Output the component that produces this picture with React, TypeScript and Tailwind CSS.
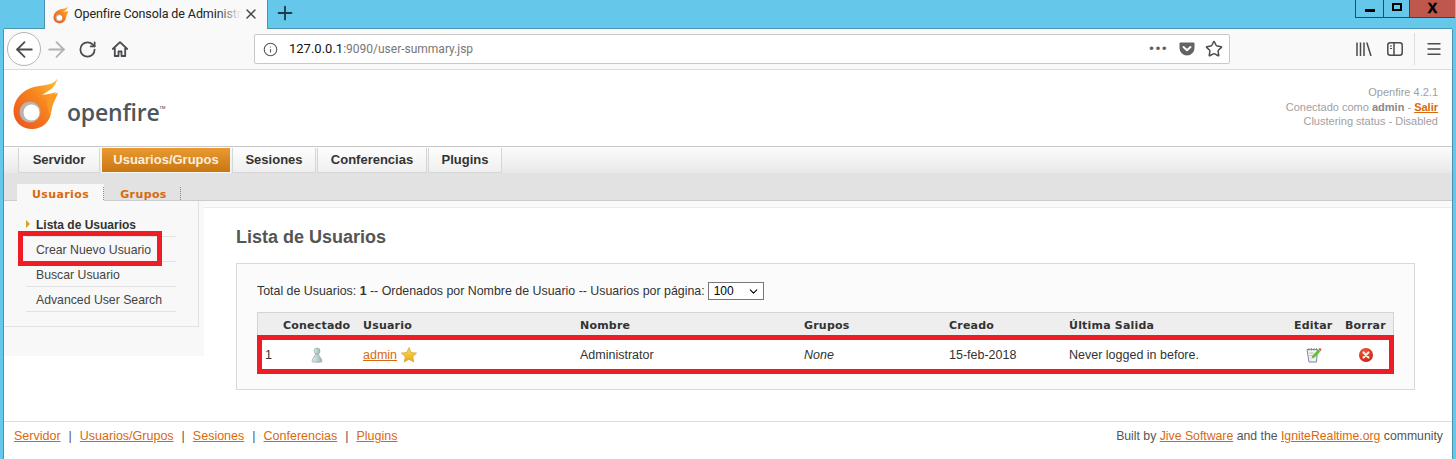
import { ArrowLeft, ArrowRight, RotateCw, Info, Star, Menu, Plus, X, ChevronDown } from "lucide-react";

const sans = "font-['Liberation_Sans',Arial,sans-serif]";
const verdana = "font-['DejaVu_Sans',Verdana,sans-serif]";

function FlameLogo({ className, id }: { className: string; id: string }) {
  return (
    <svg viewBox="0 0 46 54" className={className}>
      <defs>
        <linearGradient id={`${id}a`} x1="0.100" y1="0.900" x2="0.900" y2="0.050">
          <stop offset="0" stopColor="#ec5a1e" />
          <stop offset="0.600" stopColor="#f7851f" />
          <stop offset="1" stopColor="#fbb82f" />
        </linearGradient>
      </defs>
      {/* upper flame and body */}
      <path
        d="M44 1C43 6 36 8 26 9C12 11 1 20 0.500 34C0.500 45 9 52 19 52C30 52 38 44 38 34C38 26 40 20 43 15C38 17 33 17 29 18C35 14 44 10 44 1Z"
        fill={`url(#${id}a)`}
      />
      {/* lower wing */}
      <path d="M45 15.500C44 20 41 24 39.500 29C38.500 33 38.500 36 37 39C35 32 33 27 35 22C37 18 41 18 45 15.500Z" fill="#f99a26" />
      {/* ring and hole */}
      <circle cx="17" cy="35" r="10.500" fill="#b9b4ae" />
      <circle cx="18.500" cy="35.500" r="8" fill="#ffffff" />
    </svg>
  );
}

function HomeIcon() {
  return (
    <svg viewBox="0 0 16 16" className="ml-[15px] w-4 h-4" fill="none" stroke="#4a4a4f" strokeWidth="1.800" strokeLinejoin="round">
      <path d="M0.800 8L8 1.200 15.200 8" strokeLinecap="round" />
      <path d="M2.800 7v8h3.700v-4.500h3V15h3.700V7" />
    </svg>
  );
}

function Pocket() {
  return (
    <svg viewBox="0 0 16 16" className="w-4 h-4">
      <path d="M1.500 1.500h13a1 1 0 0 1 1 1V7a7.500 7.500 0 0 1-15 0V2.500a1 1 0 0 1 1-1Z" fill="#636363" />
      <path d="M4.500 6l3.500 3.300L11.500 6" fill="none" stroke="#f9f9f9" strokeWidth="2" strokeLinecap="round" strokeLinejoin="round" />
    </svg>
  );
}

function Library() {
  return (
    <svg viewBox="0 0 16 14" className="w-4 h-[14px]" stroke="#4a4a4f" strokeWidth="1.500" fill="none">
      <path d="M1 0.500V14M4.500 0.500V14M8 0.500V14M10.800 0.500L15 14" />
    </svg>
  );
}

function SidebarIcon() {
  return (
    <svg viewBox="0 0 16 14" className="w-4 h-[14px]" fill="none">
      <rect x="0.800" y="0.800" width="14.400" height="12.400" rx="2.500" stroke="#4a4a4f" strokeWidth="1.500" />
      <path d="M7 1v12" stroke="#4a4a4f" strokeWidth="1.500" />
      <path d="M3 4h2M3 6.500h2" stroke="#4a4a4f" strokeWidth="1.200" />
    </svg>
  );
}

function PersonIcon() {
  return (
    <svg viewBox="0 0 12 16" className="w-3 h-4">
      <defs>
        <linearGradient id="person" x1="0" y1="0" x2="1" y2="0">
          <stop offset="0" stopColor="#dcecec" />
          <stop offset="1" stopColor="#9db6b6" />
        </linearGradient>
      </defs>
      <circle cx="6" cy="4" r="3" fill="url(#person)" stroke="#8a9a9a" strokeWidth="0.600" />
      <path d="M4.500 7C4 10 1 11 1 14.500C1 15.500 11 15.500 11 14.500C11 11 8 10 7.500 7Z" fill="url(#person)" stroke="#8a9a9a" strokeWidth="0.600" />
    </svg>
  );
}

function StarIcon() {
  return (
    <svg viewBox="0 0 16 16" className="w-4 h-4">
      <defs>
        <linearGradient id="star" x1="0" y1="0" x2="0" y2="1">
          <stop offset="0" stopColor="#fbdc5a" />
          <stop offset="1" stopColor="#e8a91c" />
        </linearGradient>
      </defs>
      <path d="M8 0.500l2.300 5 5.300.6-3.900 3.600 1.100 5.300L8 12.300 3.200 15l1.100-5.300L.4 6.100l5.300-.6Z" fill="url(#star)" stroke="#c99b1a" strokeWidth="0.600" />
    </svg>
  );
}

function EditIcon() {
  return (
    <svg viewBox="0 0 16 16" className="w-4 h-4">
      <path d="M1 2.500h10.500l-1 12.500H3Z" fill="#eef1f5" stroke="#7d8798" strokeWidth="1" />
      <path d="M3 1v2.500M5.500 1v2.500M8 1v2.500M10.500 1v2.500" stroke="#7d8798" strokeWidth="0.800" />
      <path d="M3.500 6h4M3.800 8.500h2.500" stroke="#e3a56b" strokeWidth="0.800" />
      <path d="M5.500 11.500l1-3 6-6 2 2-6 6Z" fill="#5cc03a" />
      <path d="M12.500 2l2 2 1-1.500L14 1Z" fill="#d83a3a" />
    </svg>
  );
}

function DeleteIcon() {
  return (
    <svg viewBox="0 0 14 14" className="w-[14px] h-[14px]">
      <defs>
        <radialGradient id="del" cx="0.400" cy="0.300" r="0.800">
          <stop offset="0" stopColor="#f2583a" />
          <stop offset="1" stopColor="#c2200f" />
        </radialGradient>
      </defs>
      <circle cx="7" cy="7" r="7" fill="url(#del)" />
      <path d="M4.500 4.500l5 5M9.500 4.500l-5 5" stroke="#fbe9e2" strokeWidth="2.200" strokeLinecap="round" />
    </svg>
  );
}

const navTabs = [
  { label: "Servidor", w: "w-[82px]" },
  { label: "Usuarios/Grupos", w: "w-[130px]", active: true },
  { label: "Sesiones", w: "w-[84px]" },
  { label: "Conferencias", w: "w-[110px]" },
  { label: "Plugins", w: "w-[74px]" },
];

const sideItems = ["Lista de Usuarios", "Crear Nuevo Usuario", "Buscar Usuario", "Advanced User Search"];

const columns = "grid grid-cols-[26px_80px_217px_224px_145px_120px_225px_51px_49px] items-center";

const footerLinks = ["Servidor", "Usuarios/Grupos", "Sesiones", "Conferencias", "Plugins"];

export default function App() {
  return (
    <div className={`w-[1456px] h-[459px] overflow-hidden flex flex-col bg-[#65c8ea] ${sans}`}>
      {/* title bar */}
      <div className="h-[29px] flex shrink-0 relative z-10">
        <div className="ml-[44px] w-[224px] h-[29px] bg-[#f9f9f9] border-x border-[#4a94b0] flex items-center pl-[8px] font-['Roboto','Open_Sans',sans-serif] relative">
          <FlameLogo id="fav" className="w-[16px] h-[18px]" />
          <span className="ml-[5px] whitespace-nowrap text-[12.500px] tracking-[-0.100px] text-[#222]">Openfire Consola de Administr</span>
          <div className="absolute left-[172px] top-0 bottom-0 w-[24px] bg-gradient-to-r from-transparent to-[#f9f9f9]" />
          <X className="absolute left-[198px] top-[6px] w-[16px] h-[16px] text-[#444]" strokeWidth={2} />
        </div>
        <Plus className="ml-[6px] mt-[2px] w-[22px] h-[22px] text-[#1c3a48]" strokeWidth={2} />
        <div className="ml-auto mr-px h-[18px] flex border-b border-[#2c4a58] self-start">
          <div className="w-[29px] border-x border-[#2c4a58] flex items-center justify-center">
            <div className="w-[10px] h-[3px] bg-black mt-[3px]" />
          </div>
          <div className="w-[26px] border-r border-[#2c4a58] flex items-center justify-center">
            <div className="w-[10px] h-[8px] border-2 border-black -mt-[3px]" />
          </div>
          <div className="w-[45px] bg-[#c0574c] flex items-center justify-center -mt-px">
            <span className="text-[14px] font-black text-black leading-none [-webkit-text-stroke:0.5px_black]">X</span>
          </div>
        </div>
      </div>

      {/* browser window */}
      <div className="flex-1 ml-[3px] mr-[3px] flex flex-col bg-white border-l border-r border-[#4a94b0] relative">
        <div className="absolute -top-px left-0 right-0 h-px bg-[#4a94b0]" />
        <div className="absolute -top-px left-[41px] w-[222px] h-px bg-[#f9f9f9]" />

        {/* toolbar */}
        <div className="h-[41px] shrink-0 bg-[#f9f9f9] border-b border-[#dcdcdc] flex items-center text-[#4a4a4f]">
          <div className="ml-[3px] w-[34px] h-[34px] rounded-full border border-[#b5b5b5] bg-white flex items-center justify-center shrink-0">
            <ArrowLeft className="w-[25px] h-[25px]" strokeWidth={1.700} />
          </div>
          <ArrowRight className="ml-[3px] w-[25px] h-[25px] text-[#b1b1b3] shrink-0" strokeWidth={1.700} />
          <RotateCw className="ml-[9px] w-[19px] h-[19px] shrink-0" strokeWidth={2.200} />
          <HomeIcon />
          <div className="ml-[126px] w-[976px] h-[30px] rounded-[2px] bg-white border border-[#c8c8c8] flex items-center pl-[8px] pr-[6px] font-['Roboto','Open_Sans',sans-serif]">
            <Info className="w-[15px] h-[15px] text-[#5a5a5a]" strokeWidth={1.800} />
            <span className="ml-[11px] text-[13px] text-[#111]">127.0.0.1</span>
            <span className="text-[12px] text-[#777]">:9090/user-summary.jsp</span>
            <span className="ml-auto mr-[11px] text-[#5f5f5f] text-[15px] leading-none font-bold tracking-[1px]">•••</span>
            <Pocket />
            <Star className="ml-[10px] w-[18px] h-[18px] text-[#4a4a4f]" strokeWidth={2} />
          </div>
          <div className="ml-[126px]">
            <Library />
          </div>
          <div className="ml-[15px]">
            <SidebarIcon />
          </div>
          <div className="ml-[11px] h-[32px] border-l border-[#dedede]" />
          <Menu className="ml-[10px] w-[18px] h-[18px]" strokeWidth={1.800} />
        </div>

        {/* openfire header */}
        <div className="h-[76px] shrink-0 flex">
          <div className="flex items-start ml-[9px] mt-[7px]">
            <FlameLogo id="logo" className="w-[46px] h-[54px]" />
            <div className="ml-[8px] mt-[20px] flex items-start text-[#4d565a] font-['Open_Sans',sans-serif] font-semibold text-[23px] leading-[30px] tracking-[-0.200px]">
              openfire<span className="text-[4px] leading-[12px] mt-[5px] tracking-normal">TM</span>
            </div>
          </div>
          <div className="ml-auto mr-[14px] mt-[15px] text-right text-[11px] leading-[14.500px] text-[#a0a0a0]">
            <div>Openfire 4.2.1</div>
            <div>
              Conectado como <b className="text-[#8a8a8a]">admin</b> - <a className="font-bold text-[#d96a0c] underline">Salir</a>
            </div>
            <div>Clustering status - Disabled</div>
          </div>
        </div>

        {/* main nav */}
        <div className="h-[27px] shrink-0 border-t border-[#c8c8c8] bg-gradient-to-b from-[#fbfbfb] to-[#e9e9e9] flex pl-[14px] pt-px">
          {navTabs.map((t) => (
            <div
              key={t.label}
              className={`${t.w} h-[25px] mr-px flex items-center justify-center text-[13px] font-bold border-x border-b ${
                t.active
                  ? "bg-gradient-to-b from-[#ea9a30] to-[#c9760f] text-[#fbeedd] border-[#f6f6f6]"
                  : "bg-gradient-to-b from-[#fdfdfd] to-[#efefef] text-[#333] border-[#d6d6d6]"
              }`}
            >
              {t.label}
            </div>
          ))}
        </div>

        {/* sub nav */}
        <div className={`h-[28px] shrink-0 bg-[#e2e2e2] border-b border-[#cccccc] flex items-end pl-[13px] text-[11px] font-bold tracking-[0.400px] text-[#d96a0c] relative z-10 ${verdana}`}>
          <div className="w-[87px] h-[19px] bg-[#f8f8f8] flex items-center justify-center -mb-[3px] pt-[3px] relative">
            Usuarios
            <span className="absolute right-0 top-[3px] h-[13px] border-r border-dotted border-[#888]" />
          </div>
          <div className="w-[77px] h-[19px] flex items-center justify-center -mb-[3px] pt-[3px] pl-[2px] relative">
            Grupos
            <span className="absolute right-0 top-[3px] h-[13px] border-r border-dotted border-[#888]" />
          </div>
        </div>

        {/* body */}
        <div className="flex-1 flex min-h-0">
          <div className="w-[200px] shrink-0 self-start h-[155px] bg-[#f8f8f8] relative">
            <div className="w-[195px] h-[126px] border-r border-b border-[#e2e2e2] pt-[11px] pl-[22px]">
              {sideItems.map((s, i) => (
                <div key={s} className={`w-[150px] h-[25px] flex items-center pl-[10px] border-b border-[#e2e2e2] relative ${i === 0 ? "font-bold text-[#333] text-[12px] pt-px" : "text-[#444] text-[12.250px] pt-[2px]"}`}>
                  {i === 0 && <span className="absolute left-0 top-[8px] border-y-[4px] border-y-transparent border-l-[4px] border-l-[#d9a21c]" />}
                  {s}
                </div>
              ))}
            </div>
            {/* red highlight over the menu item */}
            <div className="absolute left-[14px] top-[30px] w-[144px] h-[35px] border-[5px] border-[#ee1c25]" />
          </div>

          <div className="flex-1 flex flex-col min-w-0">
            <div className="h-[7px] shrink-0 bg-[#fafafa] border-b border-[#ebebeb]" />
            <div className="flex-1 pl-[32px] pr-[37px]">
              <h1 className="mt-[17px] text-[18px] leading-[24px] font-bold text-[#555]">Lista de Usuarios</h1>
              <div className="mt-[14px] h-[127px] border border-[#d9d9d9] bg-[#fbfbfb] px-[20px] pt-[17px]">
                <div className="flex items-center text-[12.400px] text-[#333] h-[20px]">
                  <span>
                    Total de Usuarios: <b>1</b> -- Ordenados por Nombre de Usuario -- Usuarios por página:
                  </span>
                  <div className="ml-[3px] w-[56px] h-[18px] bg-white border border-[#777] flex items-center pl-[5px] text-[12px] text-black">
                    100
                    <ChevronDown className="ml-auto mr-[3px] w-[13px] h-[13px]" strokeWidth={2} />
                  </div>
                </div>
                <div className="mt-[11px] w-[1137px]">
                  <div className={`${columns} h-[23px] pt-[6px] bg-[#eeeeee] shadow-[inset_1px_1px_0_#d4d4d4,inset_-1px_0_0_#d4d4d4] text-[11px] font-bold text-[#333] tracking-[0.200px] ${verdana}`}>
                    <span />
                    <span>Conectado</span>
                    <span>Usuario</span>
                    <span>Nombre</span>
                    <span>Grupos</span>
                    <span>Creado</span>
                    <span>Última Salida</span>
                    <span>Editar</span>
                    <span>Borrar</span>
                  </div>
                  <div className={`${columns} h-[39px] pt-px bg-white text-[12.500px] text-[#333] relative`}>
                    <span className="pl-[8px]">1</span>
                    <span className="pl-[28px] flex">
                      <PersonIcon />
                    </span>
                    <span className="flex items-center gap-[4px]">
                      <a className="text-[#d96a0c] underline">admin</a>
                      <StarIcon />
                    </span>
                    <span>Administrator</span>
                    <span className="italic">None</span>
                    <span>15-feb-2018</span>
                    <span>Never logged in before.</span>
                    <span className="pl-[12px] flex">
                      <EditIcon />
                    </span>
                    <span className="pl-[14px] flex">
                      <DeleteIcon />
                    </span>
                    {/* red highlight over the row */}
                    <div className="absolute inset-0 border-[5px] border-[#ee1c25]" />
                  </div>
                </div>
              </div>
            </div>
          </div>
        </div>

        {/* footer */}
        <div className="h-[38px] shrink-0 border-t border-[#dddddd] flex items-start pt-[5px] pl-[10px] pr-[9px] text-[12.500px] text-[#555]">
          <div className="flex items-center">
            {footerLinks.map((f, i) => (
              <span key={f} className="flex items-center">
                {i > 0 && <span className="mx-[8px]">|</span>}
                <a className="text-[#d96a0c] underline">{f}</a>
              </span>
            ))}
          </div>
          <div className="ml-auto text-[12.250px]">
            Built by <a className="text-[#d96a0c] underline">Jive Software</a> and the <a className="text-[#d96a0c] underline">IgniteRealtime.org</a> community
          </div>
        </div>
      </div>
    </div>
  );
}
